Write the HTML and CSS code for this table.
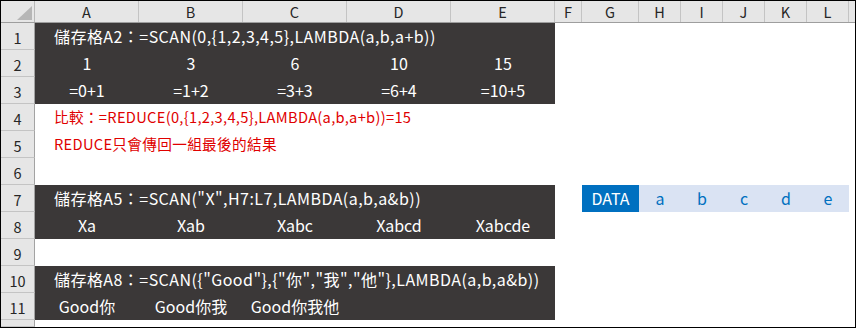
FILE: index.html
```html
<!DOCTYPE html>
<html lang="zh-Hant">
<head>
<meta charset="utf-8">
<title>SCAN</title>
<link rel="stylesheet" href="styles.css">
</head>
<body>
<div class="sheet">
  <div class="row head">
    <div class="corner"><span class="tri"></span></div>
    <div class="ch">A</div><div class="ch">B</div><div class="ch">C</div><div class="ch">D</div><div class="ch">E</div>
    <div class="ch">F</div><div class="ch">G</div><div class="ch">H</div><div class="ch">I</div><div class="ch">J</div>
    <div class="ch">K</div><div class="ch">L</div><div class="ch last"></div>
  </div>

  <div class="row">
    <div class="rh">1</div>
    <div class="c dark span5 left">儲存格A2：=SCAN(0,{1,2,3,4,5},LAMBDA(a,b,a+b))</div>
  </div>
  <div class="row">
    <div class="rh">2</div>
    <div class="c dark">1</div><div class="c dark">3</div><div class="c dark">6</div><div class="c dark">10</div><div class="c dark">15</div>
  </div>
  <div class="row">
    <div class="rh">3</div>
    <div class="c dark">=0+1</div><div class="c dark">=1+2</div><div class="c dark">=3+3</div><div class="c dark">=6+4</div><div class="c dark">=10+5</div>
  </div>
  <div class="row">
    <div class="rh">4</div>
    <div class="c red span-wide left">比較：=REDUCE(0,{1,2,3,4,5},LAMBDA(a,b,a+b))=15</div>
  </div>
  <div class="row">
    <div class="rh">5</div>
    <div class="c red span-wide left">REDUCE只會傳回一組最後的結果</div>
  </div>
  <div class="row">
    <div class="rh">6</div>
  </div>
  <div class="row">
    <div class="rh">7</div>
    <div class="c dark span5 left">儲存格A5：=SCAN("X",H7:L7,LAMBDA(a,b,a&amp;b))</div>
    <div class="c"></div>
    <div class="c data">DATA</div>
    <div class="c item">a</div><div class="c item">b</div><div class="c item">c</div><div class="c item">d</div><div class="c item">e</div>
  </div>
  <div class="row">
    <div class="rh">8</div>
    <div class="c dark">Xa</div><div class="c dark">Xab</div><div class="c dark">Xabc</div><div class="c dark">Xabcd</div><div class="c dark">Xabcde</div>
  </div>
  <div class="row">
    <div class="rh">9</div>
  </div>
  <div class="row">
    <div class="rh">10</div>
    <div class="c dark span5 left">儲存格A8：=SCAN({"Good"},{"你","我","他"},LAMBDA(a,b,a&amp;b))</div>
  </div>
  <div class="row">
    <div class="rh">11</div>
    <div class="c dark">Good你</div><div class="c dark">Good你我</div><div class="c dark">Good你我他</div><div class="c dark"></div><div class="c dark"></div>
  </div>
  <div class="row tail">
    <div class="rh"></div>
  </div>
</div>
</body>
</html>
```

FILE: styles.css
```css
html, body {
  margin: 0;
  padding: 0;
  background: #ffffff;
}

.sheet {
  box-sizing: border-box;
  width: 856px;
  height: 328px;
  border: 1px solid #000000;
  overflow: hidden;
  display: flex;
  flex-direction: column;
  font-family: "Noto Sans CJK TC", sans-serif;
  font-size: 16px;
  color: #000;
}

.row {
  display: grid;
  grid-template-columns: 34px 104px 104px 104px 104px 104px 27px 57px 42px 42px 42px 42px 42px 1fr;
  height: 27px;
  flex: none;
}

.row.head {
  height: 22px;
  background: #e6e6e6;
  border-bottom: 1px solid #9e9e9e;
  box-sizing: border-box;
}

.row.tail {
  flex: 1;
  height: auto;
}

.corner {
  position: relative;
  border-right: 1px solid #b8b8b8;
}

.tri {
  position: absolute;
  right: 2px;
  bottom: 2px;
  width: 0;
  height: 0;
  border-left: 15px solid transparent;
  border-bottom: 14px solid #b6b6b6;
}

.ch {
  border-right: 1px solid #c4c4c4;
  display: flex;
  align-items: center;
  justify-content: center;
  font-size: 14.5px;
  color: #262626;
  line-height: 1;
  padding-top: 1px;
}

.ch.last {
  border-right: none;
}

.rh {
  box-sizing: border-box;
  background: #e6e6e6;
  border-right: 1px solid #a3a3a3;
  border-bottom: 1px solid #c4c4c4;
  display: flex;
  align-items: center;
  justify-content: center;
  font-size: 14.5px;
  color: #262626;
  padding-top: 2px;
}

.c {
  display: flex;
  align-items: center;
  justify-content: center;
  white-space: nowrap;
  line-height: 1;
  padding-bottom: 1px;
}

.left {
  justify-content: flex-start;
  padding-left: 19px;
  letter-spacing: 0.45px;
}

.span5 {
  grid-column: 2 / 7;
}

.span-wide {
  grid-column: 2 / 9;
}

.dark {
  background: #3b3838;
  color: #ffffff;
}

.red {
  color: #e00000;
  font-size: 14.67px;
  letter-spacing: 0.3px;
}

.data {
  background: #0070c0;
  color: #ffffff;
}

.item {
  background: #dae3f3;
  color: #0070c0;
}
```
